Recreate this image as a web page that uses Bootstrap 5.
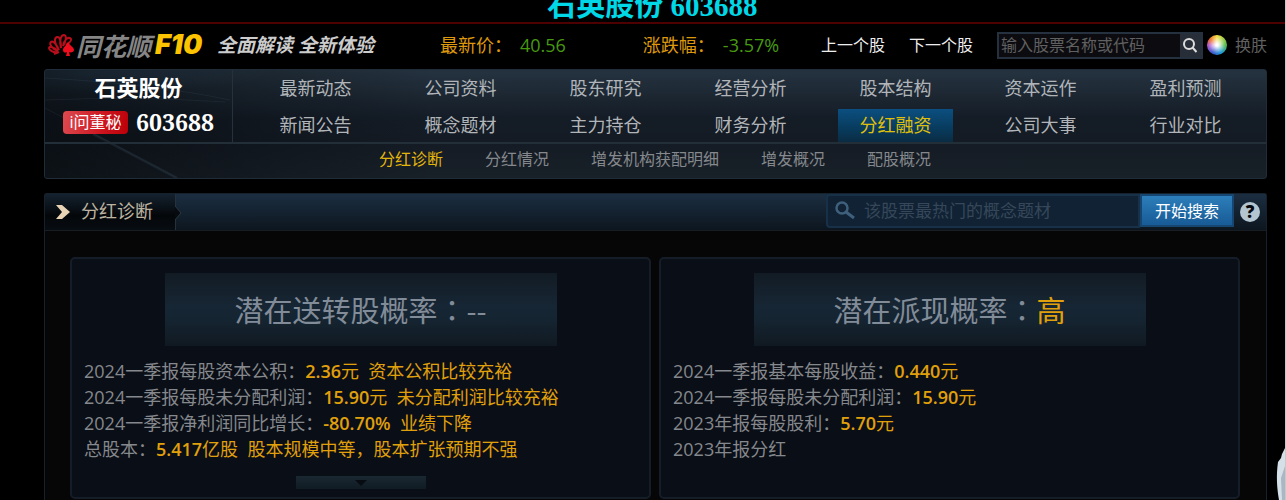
<!DOCTYPE html>
<html lang="zh-CN">
<head>
<meta charset="utf-8">
<meta name="viewport" content="width=device-width, initial-scale=1">
<title>石英股份 603688 分红融资</title>
<link href="https://cdn.jsdelivr.net/npm/bootstrap@5.3.0/dist/css/bootstrap.min.css" rel="stylesheet">
<style>
body{background:#000;color:#85888c;font-family:"Open Sans","Noto Sans CJK SC",sans-serif;font-size:18px;line-height:26px;font-weight:400;border-right:1px solid #c8c8c8;min-height:100vh}
a{text-decoration:none;color:inherit}
.page-wrap{padding:0 18px 0 44px}
.stock-title{height:24px;border-bottom:2px solid #4e0000;overflow:hidden;color:#00d8e8;font:bold 29px/22px "Liberation Serif","Noto Sans CJK SC",serif;padding-left:20px}
.stock-title span{margin-top:-5px}
.top-row{height:42px;margin-bottom:3px}
.brand-mark{width:28px;height:24px}
.brand-name{font:italic 700 25px/30px "Noto Sans CJK SC",sans-serif;color:#858585}
.brand-f10{font:italic 900 27px/30px Inter,"Open Sans",sans-serif;color:#fcc400;width:54px}
.slogan{font:italic 700 19px/30px "Open Sans","Noto Sans CJK SC",sans-serif;color:#ccc;margin-left:8px}
.quote-label{color:#dd980c}.quote-value{color:#479a10}
.quote-a{margin-left:66px}.quote-b{margin-left:77px}
.step{font-size:16px;color:#eee}
.code-box{height:27px;width:206px;border:2px solid #26313f;background:#0c0c10}
.code-box input{min-width:0;background:none;border:0;color:#aaa;font-size:16px;padding:0 2px}
.code-box input::placeholder{color:#606060;opacity:1}
.code-box button{width:24px;border:0;background:#282e38;padding:0;display:flex;align-items:center;justify-content:center}
.wheel{width:20px;height:20px;border-radius:50%;background:radial-gradient(circle,#fff 0 8%,#fff0 60%),conic-gradient(#f4e04a,#53bd4a 90deg,#1d9bd6 150deg,#3a59cf 210deg,#b05bd0 265deg,#f0722c 310deg,#f4e04a)}
.skin{font-size:16px;color:#606060}
.nav-panel{border:1px solid #202c37;border-radius:3px;height:110px;background:radial-gradient(ellipse 190px 20px at 40px 3px,#32506a88,#0000),linear-gradient(#253340,#141c26 45%,#141b24 66%,#182028);position:relative;overflow:hidden}
.nav-panel::before{content:"";position:absolute;inset:0;background:linear-gradient(90deg,#05080b99,#0000 32%)}
.nav-panel>*{position:relative}
.nav-panel .rays{position:absolute;left:0;top:0;width:300px;height:108px}
.nav-top{height:74px;border-bottom:2px solid #222e38}
.who{width:188px;border-right:1px solid #26313b;color:#fff}
.who-name{font:700 22px/32px "Noto Sans CJK SC",sans-serif}
.who-code{font:700 23px/24px "Noto Serif","DejaVu Serif",serif}
.ask{font-size:16px;line-height:22px;width:65px;height:23px;border-radius:4px;color:#fff;background:linear-gradient(100deg,#dc4a50,#ce1620 60%,#bb0008)}
.menu{display:grid;grid-template-columns:repeat(7,1fr);padding:0 8px 0 10px;grid-template-rows:37px 37px}
.menu a{color:#b1b5b9;margin:2px 15px 0;text-align:center;line-height:32px;height:33px}
.menu a.active{background:linear-gradient(#0b4f80,#083b5d 60%,#0a2c43);color:#e0c00c}
.submenu{gap:42px;padding:2px 0 0 334px;font-size:16px}
.submenu a.active{color:#e4b60c}
.block{margin-top:14px;border:1px solid #17212b;border-bottom:0;border-radius:3px 3px 0 0;background:#060606}
.block-head{height:37px;background:linear-gradient(#1b2e41,#0d161f);border-bottom:1px solid #171d22}
.block-tab{width:131px;height:100%;background:linear-gradient(#14222f,#04070a 60%,#080d12);border-right:1px solid #26323b;color:#bdb3a0;font-weight:400;padding-left:11px;position:relative;gap:11px;margin:0;font-size:18px}
.block-tab .notch{position:absolute;left:130px;top:12px}
.topic{width:314px;height:34px;border:2px solid #173149;background:#102234;border-radius:4px 0 0 4px;padding:0 6px}
.topic input{min-width:0;background:none;border:0;color:#9ab;font-size:17px;padding:0}
.topic input::placeholder{color:#364759;opacity:1}
.go{width:94px;height:33px;border:2px solid #164773;background:linear-gradient(#2c7eba,#185b96);color:#fff;font-size:16px;padding:0;border-radius:0}
.help{width:20px;height:20px;border:0;border-radius:50%;background:#b3c6d0;color:#05090c;font:900 17px/20px "Noto Sans",sans-serif;padding:0;margin:0 6px}
.cards{display:grid;grid-template-columns:1fr 1fr;gap:8px;padding:26px 26px 2px 25px}
.prob{height:242px;border:2px solid #151e28;border-radius:5px;background:#0a0e16;padding:14px 12px 0}
.banner{max-width:392px;height:73px;background:linear-gradient(#121b24,#172634 45%,#152431 65%,#101921);font:400 29px/73px "Noto Sans CJK SC",sans-serif;color:#828c98;margin:0 auto 12px}
.hot{color:#e0a00c}.hot b{font-weight:600}
.prob p{margin:0;white-space:nowrap}
.more{width:130px;height:13px;border:0;padding:0;background:linear-gradient(#1a2832,#101b23);display:flex;align-items:center;justify-content:center;margin:14px auto 0}
.mascot{position:fixed;right:1px;bottom:0;width:9px;height:52px}
</style>
</head>
<body>
<header class="stock-title d-flex justify-content-center"><span>石英股份 603688</span></header>
<div class="page-wrap">
  <div class="top-row d-flex align-items-center text-nowrap">
    <a href="#" class="d-flex align-items-center ms-1">
      <svg class="brand-mark" viewBox="0 0 28 24" fill="none" stroke="#b80e1c" stroke-width="2"><path d="M10 19C5 20 1 17 1 15s5-1 9 3C3 15 1 11 3 9s6 3 8 8C6 10 6 5 9 4s4 5 4 11C11 7 13 2 16 2s2 7-1 11c1-6 5-10 8-7 1 2-2 4-5 6"/><path d="M6 21l5-2" /><path d="M20 9c-2 4-5 5-5 8 0 3 3 3 4 2l-1 4h4l-1-4c2 1 5 0 5-2 0-3-4-4-6-8z" fill="#ee0d1d" stroke="none"/></svg>
      <span class="brand-name">同花顺</span><span class="brand-f10 ms-1">F10</span>
    </a>
    <span class="slogan">全面解读 全新体验</span>
    <span class="quote-a quote-label">最新价：</span><span class="quote-value ms-2">40.56</span>
    <span class="quote-b quote-label">涨跌幅：</span><span class="quote-value ms-2">-3.57%</span>
    <div class="ms-auto d-flex align-items-center">
      <a href="#" class="step me-4">上一个股</a><a href="#" class="step me-4">下一个股</a>
      <form class="code-box d-flex"><input class="flex-grow-1" type="text" placeholder="输入股票名称或代码" aria-label="股票代码"><button type="button" aria-label="查询"><svg width="16" height="16" viewBox="0 0 16 16" fill="none" stroke="#ddd" stroke-width="2"><circle cx="7" cy="7" r="5"/><path d="M10.500 10.500L14.500 15"/></svg></button></form>
      <a href="#" class="skin d-flex align-items-center gap-2"><span class="wheel ms-1"></span><span>换肤</span></a>
    </div>
  </div>

  <nav class="nav-panel">
    <svg class="rays" viewBox="0 0 300 108" fill="none" stroke="#9cc0e0" stroke-opacity=".07"><path d="M0 8Q110 14 185 30M0 30Q90 26 180 32M0 38L132 108"/><path d="M48 64L132 108" stroke-width="3" stroke-opacity=".07"/></svg>
    <div class="nav-top d-flex">
      <div class="who text-center"><div class="who-name">石英股份</div>
        <div class="d-flex align-items-center justify-content-center gap-2 pt-2"><a href="#" class="ask">i问董秘</a><span class="who-code">603688</span></div></div>
      <div class="menu flex-grow-1">
        <a href="#">最新动态</a><a href="#">公司资料</a><a href="#">股东研究</a><a href="#">经营分析</a><a href="#">股本结构</a><a href="#">资本运作</a><a href="#">盈利预测</a>
        <a href="#">新闻公告</a><a href="#">概念题材</a><a href="#">主力持仓</a><a href="#">财务分析</a><a href="#" class="active">分红融资</a><a href="#">公司大事</a><a href="#">行业对比</a>
      </div>
    </div>
    <div class="submenu d-flex"><a href="#" class="active">分红诊断</a><a href="#">分红情况</a><a href="#">增发机构获配明细</a><a href="#">增发概况</a><a href="#">配股概况</a></div>
  </nav>

  <section class="block">
    <div class="block-head d-flex">
      <h1 class="block-tab d-flex align-items-center"><svg width="14" height="16" viewBox="0 0 14 16"><path d="M0 1h6l8 7-8 7H0l6-7z" fill="#e8d3b4"/></svg>分红诊断<svg class="notch" width="8" height="14" viewBox="0 0 8 14"><path d="M0 0l6 7-6 7" fill="#070b0f" stroke="#2b3842"/></svg></h1>
      <form class="ms-auto d-flex">
        <div class="topic d-flex align-items-center gap-2"><svg width="22" height="20" viewBox="0 0 22 20" fill="none" stroke="#3f607c" stroke-width="2.500"><circle cx="8" cy="7" r="5.500"/><path d="M12 11l8 6" stroke-width="3"/></svg><input class="flex-grow-1" type="text" placeholder="该股票最热门的概念题材" aria-label="概念题材"></div>
        <button type="button" class="go">开始搜索</button>
        <div class="d-flex align-items-center"><button type="button" class="help" aria-label="帮助">?</button></div>
      </form>
    </div>
    <div class="cards">
      <article class="prob">
        <div class="banner text-center">潜在送转股概率<span lang="zh-TW">：</span>--</div>
        <p>2024一季报每股资本公积：<span class="hot"><b>2.36</b>元&nbsp; 资本公积比较充裕</span></p>
        <p>2024一季报每股未分配利润：<span class="hot"><b>15.90</b>元&nbsp; 未分配利润比较充裕</span></p>
        <p>2024一季报净利润同比增长：<span class="hot"><b>-80.70%</b>&nbsp; 业绩下降</span></p>
        <p>总股本：<span class="hot"><b>5.417</b>亿股&nbsp; 股本规模中等，股本扩张预期不强</span></p>
        <button type="button" class="more" aria-label="展开"><svg width="12" height="6" viewBox="0 0 12 6"><path d="M0 0h12L6 6z" fill="#060c11"/></svg></button>
      </article>
      <article class="prob">
        <div class="banner text-center">潜在派现概率<span lang="zh-TW">：</span><span class="hot">高</span></div>
        <p>2024一季报基本每股收益：<span class="hot"><b>0.440</b>元</span></p>
        <p>2024一季报每股未分配利润：<span class="hot"><b>15.90</b>元</span></p>
        <p>2023年报每股股利：<span class="hot"><b>5.70</b>元</span></p>
        <p>2023年报分红</p>
      </article>
    </div>
  </section>
</div>
<svg class="mascot" viewBox="0 0 9 52"><path d="M9 0L6 6 5 10 2 14C0 28 1 40 3 52h6z" fill="#d5dfe8"/><path d="M9 18L5 30l1 22h3z" fill="#a9b6c4"/></svg>
<script src="https://cdn.jsdelivr.net/npm/bootstrap@5.3.0/dist/js/bootstrap.bundle.min.js"></script>
</body>
</html>
